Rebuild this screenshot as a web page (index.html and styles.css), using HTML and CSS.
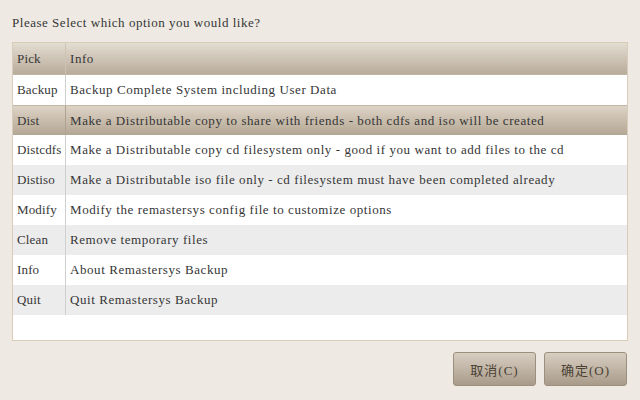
FILE: index.html
```html
<!DOCTYPE html>
<html>
<head>
<meta charset="utf-8">
<link rel="stylesheet" href="styles.css">
</head>
<body>
<div class="dialog">
  <div class="prompt">Please Select which option you would like?</div>
  <div class="list">
    <div class="row head"><div class="c1">Pick</div><div class="c2">Info</div></div>
    <div class="row odd"><div class="c1">Backup</div><div class="c2">Backup Complete System including User Data</div></div>
    <div class="row sel"><div class="c1">Dist</div><div class="c2">Make a Distributable copy to share with friends - both cdfs and iso will be created</div></div>
    <div class="row odd"><div class="c1">Distcdfs</div><div class="c2">Make a Distributable copy cd filesystem only - good if you want to add files to the cd</div></div>
    <div class="row even"><div class="c1">Distiso</div><div class="c2">Make a Distributable iso file only - cd filesystem must have been completed already</div></div>
    <div class="row odd"><div class="c1">Modify</div><div class="c2">Modify the remastersys config file to customize options</div></div>
    <div class="row even"><div class="c1">Clean</div><div class="c2">Remove temporary files</div></div>
    <div class="row odd"><div class="c1">Info</div><div class="c2">About Remastersys Backup</div></div>
    <div class="row even"><div class="c1">Quit</div><div class="c2">Quit Remastersys Backup</div></div>
    <div class="filler"></div>
  </div>
  <div class="buttons">
    <button class="btn">取消(C)</button>
    <button class="btn">确定(O)</button>
  </div>
</div>
</body>
</html>
```
FILE: styles.css
```css
html, body {
  margin: 0;
  padding: 0;
  background: #eeeae3;
}
body {
  width: 640px;
  height: 400px;
  overflow: hidden;
  font-family: "Liberation Serif", "Noto Sans CJK SC", serif;
  font-size: 13px;
  color: #363636;
  letter-spacing: 0.52px;
}
.dialog {
  padding: 15px 12px 0 12px;
  display: flex;
  flex-direction: column;
}
.prompt {
  height: 27px;
  line-height: 16px;
}
.list {
  border: 1px solid #d9ccb9;
  background: #ffffff;
  width: 614px;
  height: 297px;
  display: flex;
  flex-direction: column;
}
.row {
  display: flex;
  height: 30px;
  align-items: stretch;
  box-sizing: border-box;
}
.c1 {
  box-sizing: border-box;
  width: 53px;
  padding-left: 4px;
  border-right: 1px solid #cfcfcf;
  display: flex;
  align-items: center;
  white-space: nowrap;
  overflow: hidden;
  letter-spacing: 0.15px;
}
.c2 {
  flex: 1;
  padding-left: 4px;
  display: flex;
  align-items: center;
  white-space: nowrap;
  letter-spacing: 0.57px;
}
.row.head {
  height: 32px;
  background: linear-gradient(#e4ddd2, #b8ab9a);
  border-bottom: 1px solid #c2b5a4;
}
.row.head .c1 {
  border-right: 1px solid #cdc2b3;
}
.row.head .c1, .row.head .c2 {
  padding-top: 1px;
}
.row.odd { background: #ffffff; }
.row.even { background: #ececec; }
.row.sel {
  background: linear-gradient(#ddd3c5, #b4a694);
  border-top: 1px solid #c4b8a6;
}
.row.sel .c1 { border-right: 1px solid #b0a290; }
.filler { flex: 1; }
.buttons {
  display: flex;
  justify-content: flex-end;
  gap: 8px;
  margin-top: 11px;
  padding-right: 1px;
}
.btn {
  width: 83px;
  height: 34px;
  border: 1px solid #9d8f7d;
  border-radius: 3px;
  background: linear-gradient(#d7cec2, #a99b89);
  font-family: "Liberation Serif", "Noto Sans CJK SC", serif;
  font-size: 13px;
  color: #4a4134;
  letter-spacing: 1px;
  padding: 0;
}
```
